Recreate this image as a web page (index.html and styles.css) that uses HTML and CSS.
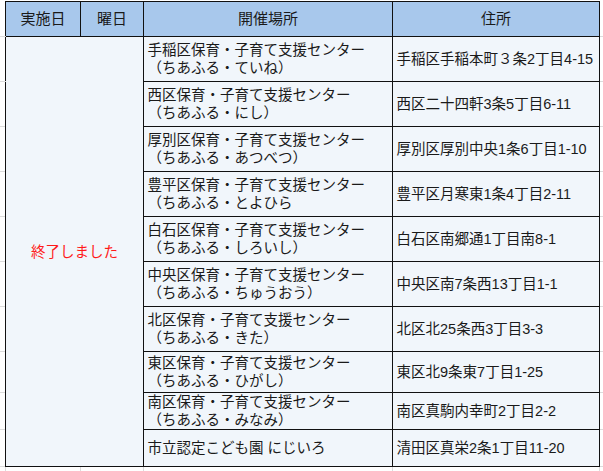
FILE: index.html
```html
<!DOCTYPE html>
<html lang="ja">
<head>
<meta charset="utf-8">
<link rel="stylesheet" href="styles.css">
</head>
<body>
<table class="sheet">
  <colgroup>
    <col class="w-gl"><col class="w-c1"><col class="w-c2"><col class="w-c3"><col class="w-c4"><col class="w-gr">
  </colgroup>
  <tr class="head">
    <td class="gut gut-l"></td>
    <th>実施日</th><th>曜日</th><th>開催場所</th><th>住所</th>
    <td class="gut gut-r"></td>
  </tr>
  <tr class="row">
    <td class="gut gut-l"></td>
    <td class="status" colspan="2" rowspan="10">終了しました</td>
    <td>手稲区保育・子育て支援センター<br>（ちあふる・ていね）</td>
    <td>手稲区手稲本町３条2丁目4-15</td>
    <td class="gut gut-r"></td>
  </tr>
  <tr class="row">
    <td class="gut gut-l"></td>
    <td>西区保育・子育て支援センター<br>（ちあふる・にし）</td>
    <td>西区二十四軒3条5丁目6-11</td>
    <td class="gut gut-r"></td>
  </tr>
  <tr class="row">
    <td class="gut gut-l"></td>
    <td>厚別区保育・子育て支援センター<br>（ちあふる・あつべつ）</td>
    <td>厚別区厚別中央1条6丁目1-10</td>
    <td class="gut gut-r"></td>
  </tr>
  <tr class="row">
    <td class="gut gut-l"></td>
    <td>豊平区保育・子育て支援センター<br>（ちあふる・とよひら</td>
    <td>豊平区月寒東1条4丁目2-11</td>
    <td class="gut gut-r"></td>
  </tr>
  <tr class="row">
    <td class="gut gut-l"></td>
    <td>白石区保育・子育て支援センター<br>（ちあふる・しろいし）</td>
    <td>白石区南郷通1丁目南8-1</td>
    <td class="gut gut-r"></td>
  </tr>
  <tr class="row">
    <td class="gut gut-l"></td>
    <td>中央区保育・子育て支援センター<br>（ちあふる・ちゅうおう）</td>
    <td>中央区南7条西13丁目1-1</td>
    <td class="gut gut-r"></td>
  </tr>
  <tr class="row">
    <td class="gut gut-l"></td>
    <td>北区保育・子育て支援センター<br>（ちあふる・きた）</td>
    <td>北区北25条西3丁目3-3</td>
    <td class="gut gut-r"></td>
  </tr>
  <tr class="row row-m">
    <td class="gut gut-l"></td>
    <td>東区保育・子育て支援センター<br>（ちあふる・ひがし）</td>
    <td>東区北9条東7丁目1-25</td>
    <td class="gut gut-r"></td>
  </tr>
  <tr class="row row-s">
    <td class="gut gut-l"></td>
    <td>南区保育・子育て支援センター<br>（ちあふる・みなみ）</td>
    <td>南区真駒内幸町2丁目2-2</td>
    <td class="gut gut-r"></td>
  </tr>
  <tr class="row row-s">
    <td class="gut gut-l"></td>
    <td>市立認定こども園 にじいろ</td>
    <td>清田区真栄2条1丁目11-20</td>
    <td class="gut gut-r"></td>
  </tr>
  <tr class="foot">
    <td class="gut"></td><td class="gut gut-v"></td><td class="gut gut-v"></td><td class="gut gut-v"></td><td class="gut gut-v"></td><td class="gut gut-v"></td>
  </tr>
</table>
</body>
</html>
```
FILE: styles.css
```css
html, body {
  margin: 0;
  padding: 0;
  background: #ffffff;
}
body {
  padding-top: 1px;
  font-family: "Liberation Sans", "Noto Sans CJK JP", sans-serif;
  font-size: 14.5px;
  line-height: 18px;
  color: #1a1a1a;
}
.sheet {
  border-collapse: collapse;
  table-layout: fixed;
  width: 603px;
}
.w-gl { width: 5px; }
.w-c1 { width: 75px; }
.w-c2 { width: 63px; }
.w-c3 { width: 249px; }
.w-c4 { width: 207px; }
.w-gr { width: 4px; }

.sheet th,
.sheet td {
  border: 1px solid #111;
  padding: 0 3px 0 4px;
  vertical-align: middle;
  text-align: left;
  white-space: nowrap;
  overflow: hidden;
}
.sheet th {
  background: #a8c8ec;
  font-weight: normal;
  font-size: 15px;
  text-align: center;
}
.head { height: 35px; }
.row { height: 45px; }
.row-m { height: 41px; }
.row-s { height: 37px; }
.foot { height: 5px; }

.sheet td { background: #f1f6fb; }
.sheet td.status {
  color: #ff1a1a;
  text-align: center;
}
.sheet td.gut {
  background: #ffffff;
  border: none;
  padding: 0;
}
.sheet td.gut-l,
.sheet td.gut-r {
  border-bottom: 1px solid #dcdcdc;
}
.sheet td.gut-v {
  border-left: 1px solid #dcdcdc;
}
```
